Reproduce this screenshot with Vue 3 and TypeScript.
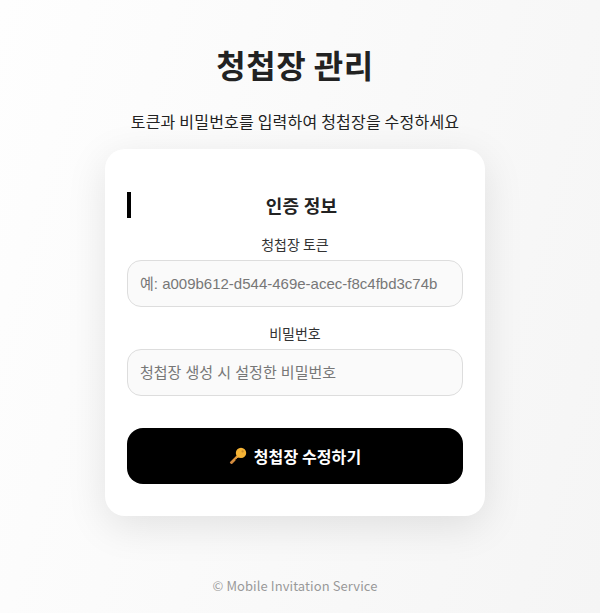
<script setup lang="ts">
const fields = [
  { id: 'token', label: '청첩장 토큰', type: 'text', placeholder: '예: a009b612-d544-469e-acec-f8c4fbd3c74b' },
  { id: 'password', label: '비밀번호', type: 'password', placeholder: '청첩장 생성 시 설정한 비밀번호' },
]
</script>

<template>
  <main class="page">
    <header class="head">
      <h1 class="title">청첩장 관리</h1>
      <p class="sub">토큰과 비밀번호를 입력하여 청첩장을 수정하세요</p>
    </header>
    <form class="card" @submit.prevent>
      <h2 class="section">인증 정보</h2>
      <div v-for="f in fields" :key="f.id" class="field">
        <label class="label" :for="f.id">{{ f.label }}</label>
        <input :id="f.id" class="input" :type="f.type" :placeholder="f.placeholder" />
      </div>
      <button class="btn" type="submit">
        <svg class="key" viewBox="0 0 18 18" aria-hidden="true">
          <defs>
            <linearGradient id="k" x1="0" y1="1" x2="1" y2="0">
              <stop offset="0" stop-color="#c9813f" />
              <stop offset="1" stop-color="#efa63a" />
            </linearGradient>
          </defs>
          <path d="M.8 15.3 8.6 7.4l2 2-1.6 1.6-1 .1-.2 1-1.2.2-.1 1.2-3.2 3.2c-.5.4-1 .4-1.5 0l-.7-.7c-.4-.4-.4-1.2-.1-1.7z" fill="url(#k)" />
          <circle cx="12" cy="5.9" r="5.2" fill="#f5b335" />
          <circle cx="13.6" cy="4.4" r="1.1" fill="#c98a2a" />
        </svg>
        <span>청첩장 수정하기</span>
      </button>
    </form>
    <footer class="foot">© Mobile Invitation Service</footer>
  </main>
</template>

<style>
html, body { margin: 0; background: #fff; }
</style>

<style scoped>
.page {
  min-height: 613px;
  box-sizing: border-box;
  padding: 38px 10px 0 0;
  display: flex;
  flex-direction: column;
  align-items: center;
  background: linear-gradient(105deg, #fefefe 0%, #f5f5f5 100%);
  font-family: "Noto Sans CJK KR", "Noto Sans", sans-serif;
  color: #222;
  text-align: center;
}
.head { margin-bottom: 15px; }
.title { margin: 0 0 18px; font-size: 32px; line-height: 52px; font-weight: 700; letter-spacing: 0.5px; color: #222; }
.sub { margin: 0; font-size: 16px; line-height: 26px; letter-spacing: 0.2px; color: #222; }
.card {
  width: 380px;
  box-sizing: border-box;
  padding: 32px 22px;
  background: #fff;
  border-radius: 20px;
  box-shadow: 0 10px 40px rgba(0, 0, 0, 0.1);
}
.section {
  margin: 11px 0 15px;
  padding-left: 9px;
  border-left: 4px solid #000;
  font-size: 18px;
  line-height: 26px;
  font-weight: 700;
  letter-spacing: 0.2px;
  color: #222;
}
.field { margin-bottom: 15px; display: flex; flex-direction: column; }
.label { font-size: 14px; line-height: 22px; margin-bottom: 5px; color: #333; }
.input {
  height: 47px;
  box-sizing: border-box;
  padding: 0 12px;
  border: 1px solid #ddd;
  border-radius: 14px;
  background: #fafafa;
  font-family: "Liberation Sans", "Noto Sans CJK KR", sans-serif;
  font-size: 15px;
  outline: none;
}
.input::placeholder { color: #777; opacity: 1; }
.btn {
  width: 100%;
  height: 56px;
  margin-top: 32px;
  display: flex;
  align-items: center;
  justify-content: center;
  gap: 7px;
  border: 0;
  border-radius: 16px;
  background: #000;
  color: #fff;
  font-family: inherit;
  font-size: 16px;
  font-weight: 700;
  letter-spacing: 0.1px;
}
.key { width: 18px; height: 18px; }
.foot { margin-top: 59px; font-size: 13px; line-height: 22px; letter-spacing: 0.08px; color: #999; }
</style>
